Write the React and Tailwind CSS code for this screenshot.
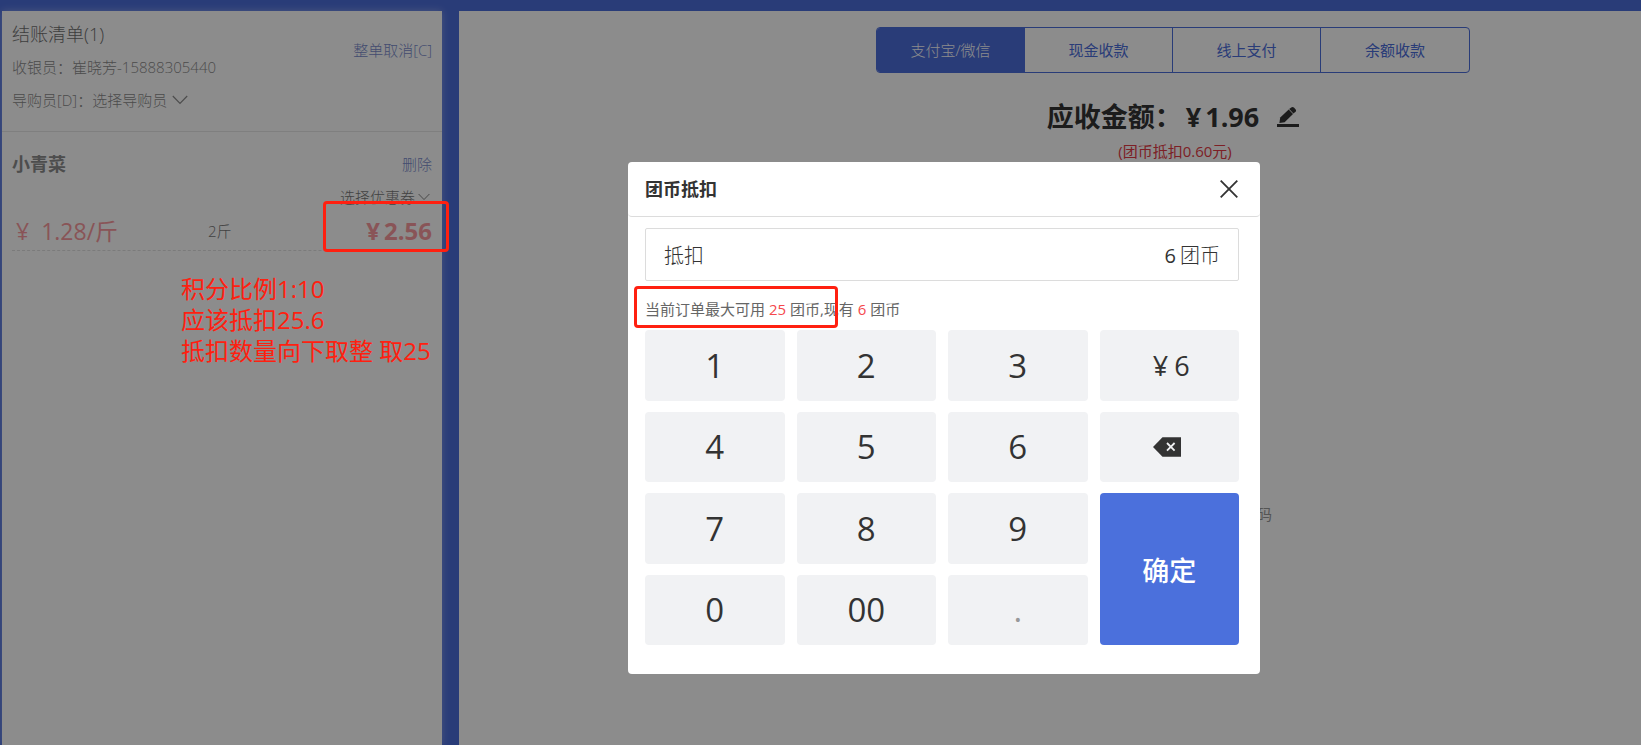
import React from "react";

const tabs = ["支付宝/微信", "现金收款", "线上支付", "余额收款"];
const keys = ["1", "2", "3", "amount", "4", "5", "6", "delete", "7", "8", "9", "confirm", "0", "00", "."];

function Chevron({ className }) {
  return (
    <svg viewBox="0 0 16 10" className={className} fill="none" stroke="currentColor" strokeWidth="1.2" aria-hidden="true">
      <path d="M0.8 1 L8 8.4 L15.2 1" />
    </svg>
  );
}

function EditIcon() {
  return (
    <svg viewBox="0 0 22 20" className="h-5 w-[22px]" fill="currentColor" aria-hidden="true">
      <rect x="0" y="17" width="22" height="3" />
      <path d="M2.4 16 L3.2 10.4 L11.7 2.4 L16 6.9 L7.6 15.2 Z" />
      <path d="M12.2 2 L14.2 0.5 Q15.6 -0.4 16.9 0.6 L18.5 2.2 Q19.6 3.5 18.6 4.7 L16.4 6.5 Z" />
    </svg>
  );
}

function DeleteIcon() {
  return (
    <svg viewBox="0 0 28 20" className="mr-1 h-5 w-7" aria-hidden="true">
      <path d="M0 10 L9.5 0.3 H28 V19.7 H9.5 Z" fill="#333" />
      <path d="M14 6 L21.6 13.6 M21.6 6 L14 13.6" stroke="#f1f2f4" strokeWidth="1.8" fill="none" />
    </svg>
  );
}

function OrderPanel() {
  return (
    <aside className="w-[440px] shrink-0 bg-white text-[15px] leading-6 font-light shadow-[0_0_8px_rgba(255,255,255,0.35)]">
      <header className="flex items-start justify-between border-b border-[#e8e8e8] px-[10px] pt-[11px] pb-[19px]">
        <div className="flex flex-col gap-[9px] text-[#8c8c8c]">
          <h1 className="text-lg leading-6 text-[#707070]">结账清单(1)</h1>
          <p>收银员：崔晓芳-15888305440</p>
          <div className="flex items-center">
            <label htmlFor="guide">导购员[D]：</label>
            <select id="guide" className="appearance-none bg-transparent">
              <option>选择导购员</option>
            </select>
            <Chevron className="ml-1 h-[10px] w-4" />
          </div>
        </div>
        <button className="mt-4 text-[#7b8ccc]">整单取消[C]</button>
      </header>
      <section className="mx-[10px] border-b border-dashed border-[#e0e0e0] pt-5 pb-px">
        <div className="flex items-center justify-between">
          <h2 className="text-lg leading-6 font-bold text-[#8c8c8c]">小青菜</h2>
          <button className="text-[#7b8ccc]">删除</button>
        </div>
        <div className="mt-[9px] flex items-center justify-end text-[#777]">
          <select aria-label="选择优惠券" className="appearance-none bg-transparent">
            <option>选择优惠券</option>
          </select>
          <Chevron className="mx-[2px] h-2 w-3" />
        </div>
        <div className="mt-1 grid grid-cols-[196px_1fr_auto] items-center leading-9">
          <span className="flex gap-3 pl-1 text-[23px] leading-9 font-normal text-[#fa9a9e]"><span>¥</span><span>1.28/斤</span></span>
          <span className="text-[#777]">2斤</span>
          <span className="flex gap-1 text-2xl leading-9 font-bold text-[#fa9a9e]"><span>¥</span><span>2.56</span></span>
        </div>
      </section>
    </aside>
  );
}

function PaymentPanel() {
  return (
    <main className="flex min-w-0 flex-1 flex-col items-center bg-white pt-4 pl-[246px] text-[15px] leading-6">
      <nav className="grid w-[594px] grid-cols-4 divide-x divide-[#4b6ddb] overflow-hidden rounded-sm border border-[#4b6ddb]">
        {tabs.map((tab, i) => (
          <button key={tab} className={i === 0 ? "h-11 bg-[#4b6ddb] font-light text-white" : "h-11 text-[#4b6ddb]"}>
            {tab}
          </button>
        ))}
      </nav>
      <div className="mt-6 flex items-center text-[27px] leading-10 font-bold text-[#333]">
        <span>应收金额：</span>
        <span className="ml-1 flex gap-1"><span>¥</span><span>1.96</span></span>
        <button aria-label="修改金额" className="ml-[18px]"><EditIcon /></button>
      </div>
      <p className="mt-[2px] pl-1 text-[#e43b46]">(团币抵扣0.60元)</p>
      <p className="mt-[339px] w-[198px] text-right text-[#999]">码</p>
    </main>
  );
}

function Key({ name }) {
  if (name === "confirm") {
    return (
      <button className="row-span-2 rounded bg-[#4b70dc] pt-1 text-[27px] font-medium text-white">确定</button>
    );
  }
  if (name === "delete") {
    return (
      <button aria-label="删除" className="flex items-center justify-center rounded bg-[#f1f2f4]"><DeleteIcon /></button>
    );
  }
  if (name === "amount") {
    return (
      <button className="flex items-center justify-center gap-1.5 rounded bg-[#f1f2f4] pt-[2px] pl-1 text-[27px] text-[#333]">
        <span>¥</span><span>6</span>
      </button>
    );
  }
  return (
    <button className={name === "." ? "rounded bg-[#f1f2f4] text-[33px] text-[#999]" : "rounded bg-[#f1f2f4] text-[33px] text-[#333]"}>
      {name}
    </button>
  );
}

function DeductionDialog() {
  return (
    <div role="dialog" aria-labelledby="dialog-title" className="w-[632px] rounded bg-white text-[#333]">
      <header className="flex h-[55px] items-center justify-between rounded border-b border-[#dcdcdc] pr-[22px] pl-[17px]">
        <h2 id="dialog-title" className="text-lg font-bold">团币抵扣</h2>
        <button aria-label="关闭">
          <svg viewBox="0 0 18 18" className="h-[18px] w-[18px]" fill="none" stroke="#333" strokeWidth="1.8">
            <path d="M0.7 0.7 L17.3 17.3 M17.3 0.7 L0.7 17.3" />
          </svg>
        </button>
      </header>
      <div className="pt-[11px] pr-[21px] pb-[29px] pl-[17px]">
        <div className="flex h-[53px] items-center rounded-xs border border-[#dcdcdc] px-[18px] pt-[2px] text-xl font-light">
          <label htmlFor="coins">抵扣</label>
          <input id="coins" defaultValue="6" className="min-w-0 flex-1 bg-transparent text-right font-normal outline-none" />
          <span className="ml-1">团币</span>
        </div>
        <p className="mt-4 text-[15px] leading-6 text-[#666]">
          当前订单最大可用 <span className="text-[#f5484d]">25</span> 团币,现有 <span className="text-[#f5484d]">6</span> 团币
        </p>
        <div className="mt-[9px] grid h-[315px] grid-cols-4 grid-rows-4 gap-x-3 gap-y-[11px]">
          {keys.map((k) => <Key key={k} name={k} />)}
        </div>
      </div>
    </div>
  );
}

export default function App() {
  return (
    <div className="relative flex min-h-screen flex-col overflow-hidden bg-[#4b6ddb] font-['Open_Sans','Noto_Sans_CJK_SC',sans-serif]">
      <div className="h-[11px]" />
      <div className="flex flex-1 gap-[17px] pl-[2px]">
        <OrderPanel />
        <PaymentPanel />
      </div>
      <div className="absolute inset-0 flex items-start justify-center bg-black/45 pt-[162px] pl-[247px]">
        <DeductionDialog />
      </div>
      <div className="pointer-events-none absolute top-[201px] left-[323px] h-[51px] w-[126px] rounded border-3 border-[#ff2010]" />
      <div className="pointer-events-none absolute top-[286px] left-[634px] h-[42px] w-[204px] rounded border-3 border-[#ff2010]" />
      <p className="pointer-events-none absolute top-[273px] left-[181px] text-2xl leading-[31px] whitespace-pre text-[#ff2010]">
        积分比例1:10<br />应该抵扣25.6<br />抵扣数量向下取整 取25
      </p>
    </div>
  );
}
